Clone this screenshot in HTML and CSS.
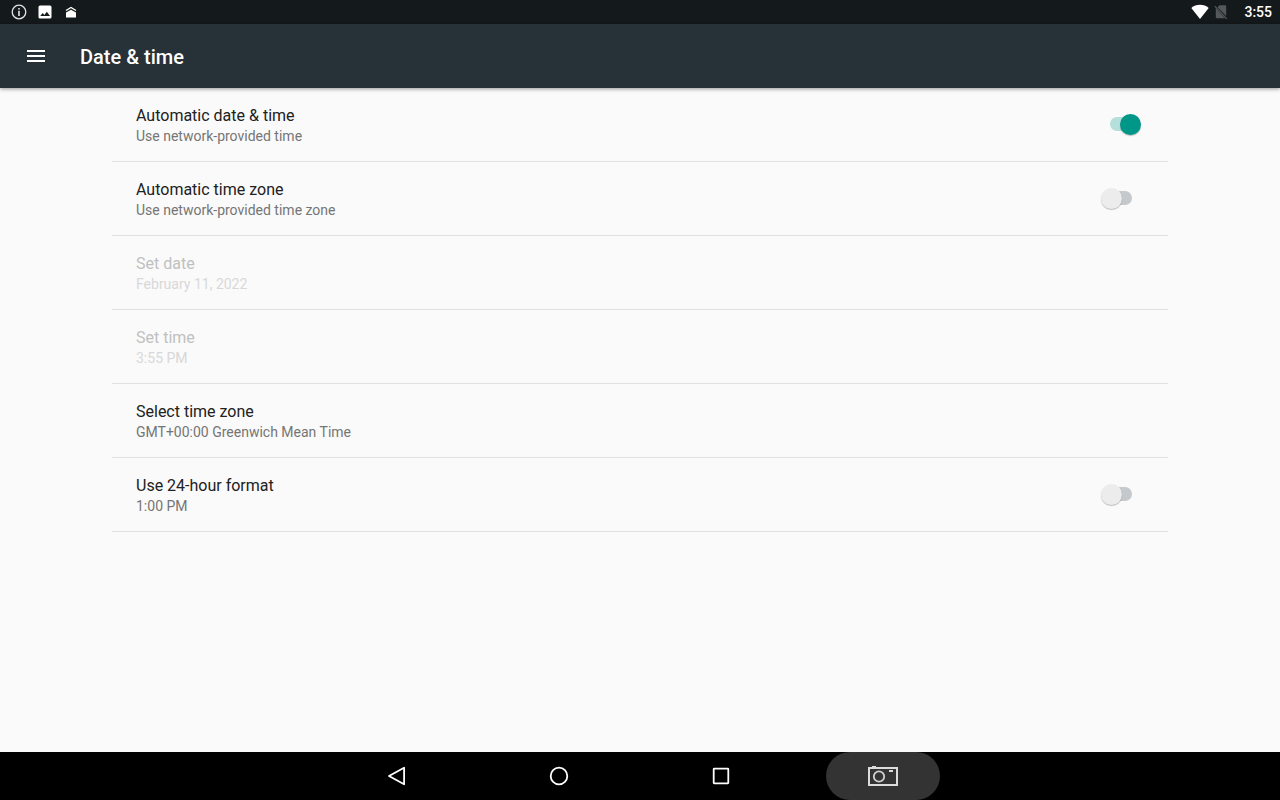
FILE: index.html
```html
<!DOCTYPE html>
<html lang="en">
<head>
<meta charset="utf-8">
<meta name="viewport" content="width=device-width, initial-scale=1">
<title>Date &amp; time</title>
<link rel="stylesheet" href="styles.css">
</head>
<body>
<div class="status-bar">
  <div class="status-notices">
    <svg width="16" height="16" viewBox="0 0 16 16" aria-hidden="true">
      <circle cx="8" cy="8" r="6.8" fill="none" stroke="#e4e5e5" stroke-width="1.3"/>
      <path d="M7.2 4h1.6v1.6H7.2zM7.2 6.8h1.6V12H7.2z" fill="#e4e5e5"/>
    </svg>
    <svg width="16" height="16" viewBox="0 0 16 16" aria-hidden="true">
      <path fill-rule="evenodd" d="M3 1.5h10a1.5 1.5 0 0 1 1.5 1.5v10a1.5 1.5 0 0 1-1.5 1.5H3a1.5 1.5 0 0 1-1.5-1.5V3A1.5 1.5 0 0 1 3 1.5zM3.2 12h9.8L9.8 7.8 7.4 10.9 5.7 8.9z" fill="#fff"/>
    </svg>
    <svg width="16" height="16" viewBox="0 0 16 16" aria-hidden="true">
      <path d="M3 8.5 8 5.7l5 2.8v5H3z" fill="#fff"/>
      <path d="M3 6.5 8 3.5l5 3" fill="none" stroke="#fff" stroke-width="1.3"/>
    </svg>
  </div>
  <div class="status-system">
    <svg width="18" height="16" viewBox="0 0 18 16" aria-hidden="true">
      <path d="M9 15 .3 3.9C2.7 2 5.6.8 9 .8s6.300 1.200 8.700 3.100z" fill="#fff"/>
    </svg>
    <svg width="16" height="16" viewBox="0 0 16 16" aria-hidden="true">
      <path d="M6.5 1.2H12a1.200 1.200 0 0 1 1.200 1.200v9.600L4.500 3.200zM2.800 4.200 12 14.300H4A1.200 1.200 0 0 1 2.800 13z" fill="#54585a"/>
      <path d="M1.800 2.100 13.800 14.900" stroke="#54585a" stroke-width="1.200"/>
    </svg>
    <span class="clock">3:55</span>
  </div>
</div>

<header class="app-bar">
  <button class="menu-button" type="button" aria-label="Open navigation">
    <svg width="24" height="24" viewBox="0 0 24 24" aria-hidden="true"><path d="M3 6h18v2H3zM3 11h18v2H3zM3 16h18v2H3z" fill="#fff"/></svg>
  </button>
  <h1 class="app-title">Date &amp; time</h1>
</header>

<main class="settings">
  <label class="row" for="auto-date">
    <span class="row-text"><span class="row-title">Automatic date &amp; time</span><span class="row-summary">Use network-provided time</span></span>
    <input class="switch" id="auto-date" type="checkbox" role="switch" checked>
  </label>
  <label class="row" for="auto-zone">
    <span class="row-text"><span class="row-title">Automatic time zone</span><span class="row-summary">Use network-provided time zone</span></span>
    <input class="switch" id="auto-zone" type="checkbox" role="switch">
  </label>
  <button class="row" type="button" disabled>
    <span class="row-text"><span class="row-title">Set date</span><span class="row-summary">February 11, 2022</span></span>
  </button>
  <button class="row" type="button" disabled>
    <span class="row-text"><span class="row-title">Set time</span><span class="row-summary">3:55 PM</span></span>
  </button>
  <button class="row" type="button">
    <span class="row-text"><span class="row-title">Select time zone</span><span class="row-summary">GMT+00:00 Greenwich Mean Time</span></span>
  </button>
  <label class="row" for="hour-format">
    <span class="row-text"><span class="row-title">Use 24-hour format</span><span class="row-summary">1:00 PM</span></span>
    <input class="switch" id="hour-format" type="checkbox" role="switch">
  </label>
</main>

<nav class="nav-bar" aria-label="System">
  <button class="nav-button" type="button" aria-label="Back">
    <svg width="24" height="24" viewBox="0 0 24 24" aria-hidden="true"><path d="M4 12 19.100 3.700v16.600z" fill="none" stroke="#fff" stroke-width="1.800" stroke-linejoin="round"/></svg>
  </button>
  <button class="nav-button" type="button" aria-label="Home">
    <svg width="24" height="24" viewBox="0 0 24 24" aria-hidden="true"><circle cx="12" cy="12" r="8.300" fill="none" stroke="#fff" stroke-width="1.800"/></svg>
  </button>
  <button class="nav-button" type="button" aria-label="Overview">
    <svg width="24" height="24" viewBox="0 0 24 24" aria-hidden="true"><rect x="4.700" y="4.700" width="14.600" height="14.600" rx=".5" fill="none" stroke="#fff" stroke-width="1.800"/></svg>
  </button>
  <button class="nav-button nav-button-active" type="button" aria-label="Screenshot">
    <svg width="32" height="24" viewBox="0 0 32 24" aria-hidden="true">
      <path d="M2 4h28v17H2z" fill="none" stroke="#dcdcdc" stroke-width="2"/>
      <path d="M5 2h4v2H5zM22 6h4v2h-4z" fill="#dcdcdc"/>
      <circle cx="12" cy="12.500" r="5.200" fill="none" stroke="#d0d0d0" stroke-width="1.800"/>
    </svg>
  </button>
</nav>
</body>
</html>
```
FILE: styles.css
```css
* {
  box-sizing: border-box;
}

body {
  display: flex;
  flex-direction: column;
  min-height: 100vh;
  margin: 0;
  background: #fafafa;
  color: #212121;
  font-family: Roboto, "Noto Sans", sans-serif;
}

button {
  padding: 0;
  border: 0;
  background: none;
  color: inherit;
  font: inherit;
}

svg {
  display: block;
}

.status-bar {
  display: flex;
  align-items: center;
  justify-content: space-between;
  height: 24px;
  padding: 0 8px 0 11px;
  background: #14191c;
  color: #fff;
}

.status-notices {
  display: flex;
  gap: 10px;
}

.status-system {
  display: flex;
  align-items: center;
  gap: 4px;
}

.clock {
  margin-left: 11px;
  font-size: 14px;
  font-weight: 500;
  line-height: 24px;
}

.app-bar {
  display: flex;
  align-items: center;
  gap: 32px;
  height: 64px;
  padding: 0 24px;
  background: #263238;
  color: #fff;
  box-shadow: 0 1px 4px rgba(0, 0, 0, 0.4);
}

.app-title {
  margin: 0;
  padding-top: 2px;
  font-size: 20px;
  font-weight: 500;
  line-height: 24px;
}

.settings {
  flex: 1;
  padding: 0 112px;
}

.row {
  display: flex;
  align-items: center;
  justify-content: space-between;
  width: 100%;
  padding: 0 24px;
  border-bottom: 1px solid #e1e1e1;
  text-align: left;
}

.row-text {
  padding: 17px 0 15px;
}

.row-title,
.row-summary {
  display: block;
}

.row-title {
  font-size: 16px;
  line-height: 22px;
}

.row-summary {
  color: #757575;
  font-size: 14px;
  line-height: 19px;
}

.row:disabled .row-title {
  color: #c0c0c0;
}

.row:disabled .row-summary {
  color: #d8d8d8;
}

.switch {
  position: relative;
  width: 22px;
  height: 14px;
  margin: 0 12px 1px;
  border-radius: 7px;
  background: #c5c9cc;
  appearance: none;
}

.switch::after {
  content: "";
  position: absolute;
  top: -3px;
  left: -9px;
  width: 21px;
  height: 21px;
  border-radius: 50%;
  background: #ececec;
  box-shadow: 0 1px 1px rgba(0, 0, 0, 0.25);
}

.switch:checked {
  background: #b5dfda;
}

.switch:checked::after {
  left: 10px;
  background: #009688;
}

.nav-bar {
  display: flex;
  justify-content: center;
  gap: 48px;
  background: #000;
}

.nav-button {
  display: flex;
  align-items: center;
  justify-content: center;
  width: 114px;
  height: 48px;
  border-radius: 24px;
}

.nav-button-active {
  background: #333;
}
```
